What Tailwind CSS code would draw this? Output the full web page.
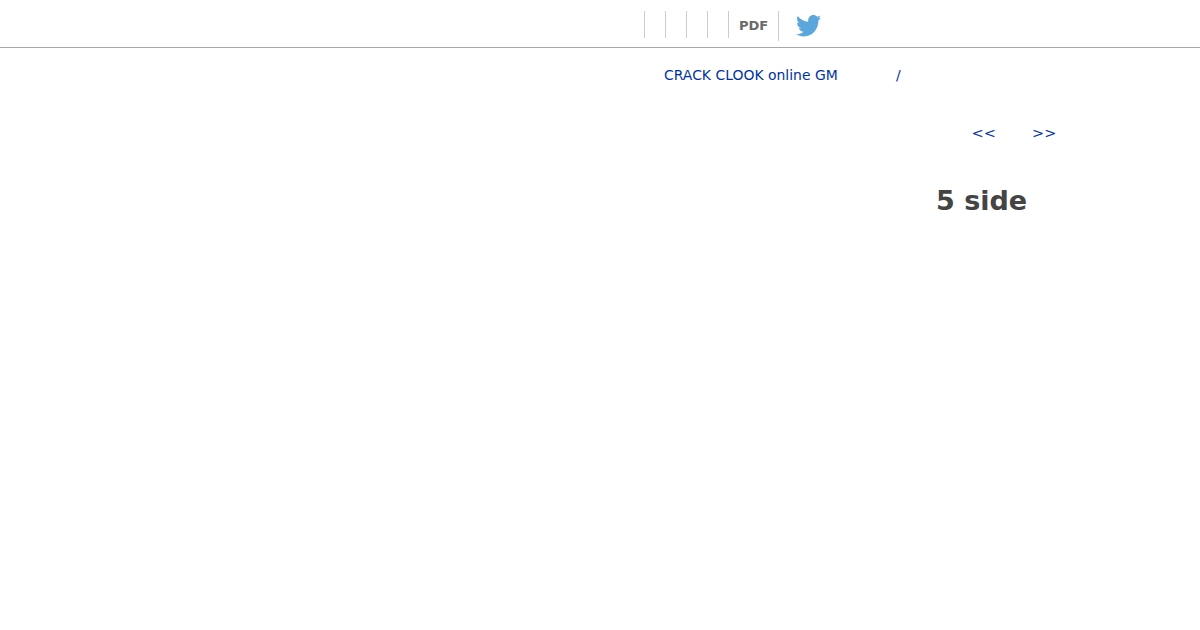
<!DOCTYPE html>
<html lang="en">
<head>
  <meta charset="UTF-8" />
  <title>5 side</title>
  <script src="https://cdn.jsdelivr.net/npm/@tailwindcss/browser@4"></script>
</head>
<body class="bg-white font-['DejaVu_Sans',sans-serif] text-[14px]">

<!-- Top bar -->
<header class="h-[48px] border-b border-[#a8a8a8] pl-[644px] pt-[11px] flex items-start">
  <div class="w-[21px] h-[27px] border-l border-[#ccc]"></div>
  <div class="w-[21px] h-[27px] border-l border-[#ccc]"></div>
  <div class="w-[21px] h-[27px] border-l border-[#ccc]"></div>
  <div class="w-[21px] h-[27px] border-l border-[#ccc]"></div>
  <div class="w-[50px] h-[27px] border-l border-[#ccc] pl-[10px] text-[13px] font-bold text-[#6a6a6a] leading-[29px]">PDF</div>
  <div class="w-[43px] h-[30px] border-l border-[#ccc] pl-[17px] pt-[4px]">
    <svg width="25" height="22" viewBox="0 0 24 20" preserveAspectRatio="none" fill="#5ba7dd"><path d="M24 2.4c-.9.4-1.8.7-2.8.8 1-.6 1.8-1.6 2.2-2.7-1 .6-2 1-3.1 1.200C19.300.7 18 .100 16.600.100c-2.700 0-4.900 2.200-4.900 4.900 0 .4 0 .8.100 1.100C7.700 5.900 4.100 4 1.700.9c-.4.700-.7 1.600-.7 2.500 0 1.700.9 3.200 2.200 4.100-.8 0-1.600-.2-2.200-.6v.1c0 2.400 1.700 4.400 3.900 4.800-.4.100-.8.200-1.300.2-.3 0-.6 0-.9-.1.600 2 2.400 3.400 4.600 3.400-1.700 1.300-3.800 2.100-6.100 2.100-.4 0-.8 0-1.200-.1 2.200 1.400 4.800 2.200 7.500 2.200 9.100 0 14-7.500 14-14v-.6c1-.7 1.800-1.600 2.500-2.500z"/></svg>
  </div>
</header>

<main class="text-[#0033a0]">
  <div class="pl-[664px] pt-[18px] flex leading-[18px]">
    <a href="#" class="w-[232px] text-[13.95px]">CRACK CLOOK online GM</a>
    <span>/</span>
  </div>
  <div class="pl-[971.5px] pt-[40px] flex leading-[18px] text-[14.5px]">
    <a href="#" class="w-[60.5px]">&lt;&lt;</a>
    <a href="#">&gt;&gt;</a>
  </div>
  <h1 class="pl-[936px] pt-[42px] text-[27px] leading-[34px] font-bold text-[#444]">5 side</h1>
</main>

</body>
</html>
